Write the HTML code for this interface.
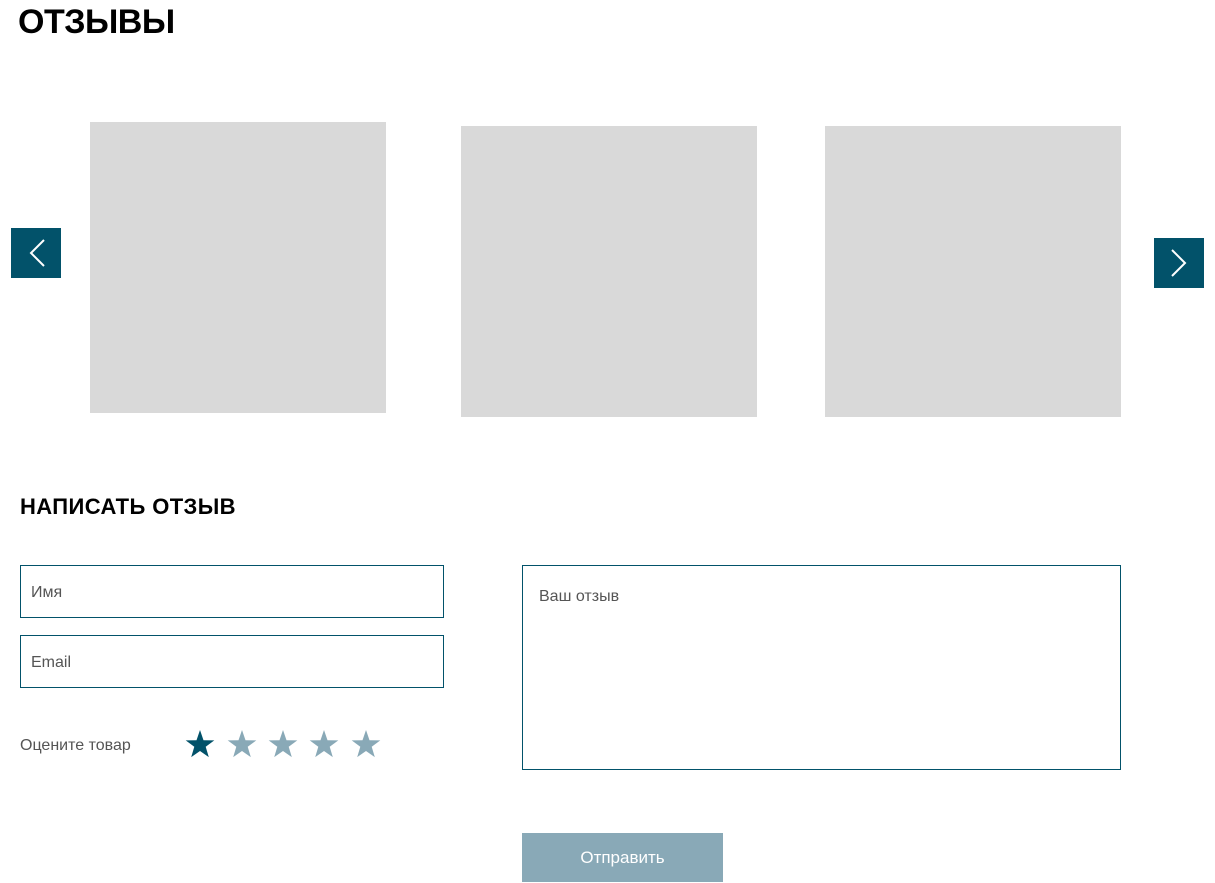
<!DOCTYPE html>
<html><head><meta charset="utf-8"><style>
body{margin:0;width:1215px;height:882px;background:#fff;font-family:"Liberation Sans",sans-serif;position:relative;overflow:hidden}
.a{position:absolute}
.img{background:#d9d9d9}
.btn{background:#02526a}
.inp{border:1px solid #02526a;box-sizing:border-box;color:#555;font-size:16px}
</style></head><body>
<div class="a" style="left:18px;top:3px;font-size:34px;font-weight:bold;color:#000;letter-spacing:-0.5px">ОТЗЫВЫ</div>
<div class="a img" style="left:90px;top:122px;width:296px;height:291px"></div>
<div class="a img" style="left:461px;top:126px;width:296px;height:291px"></div>
<div class="a img" style="left:825px;top:126px;width:296px;height:291px"></div>
<div class="a btn" style="left:11px;top:228px;width:50px;height:50px"><svg width="50" height="50"><path d="M33 12 L20 25 L33 38" stroke="#fff" stroke-width="2" fill="none"/></svg></div>
<div class="a btn" style="left:1154px;top:238px;width:50px;height:50px"><svg width="50" height="50"><path d="M18 12 L31 25 L18 38" stroke="#fff" stroke-width="2" fill="none"/></svg></div>
<div class="a" style="left:20px;top:494px;font-size:22px;font-weight:bold;color:#000;letter-spacing:0.4px">НАПИСАТЬ ОТЗЫВ</div>
<div class="a inp" style="left:20px;top:565px;width:424px;height:53px;padding:18px 0 0 10px">Имя</div>
<div class="a inp" style="left:20px;top:635px;width:424px;height:53px;padding:18px 0 0 10px">Email</div>
<div class="a inp" style="left:522px;top:565px;width:599px;height:205px;padding:22px 0 0 16px">Ваш отзыв</div>
<div class="a" style="left:20px;top:737px;font-size:16px;color:#555">Оцените товар</div>
<svg class="a" style="left:180px;top:728px" width="210" height="36">
<defs><path id="s" d="M0-15 L3.5-4.8 L14.3-4.6 L5.7 1.8 L8.8 12.1 L0 6 L-8.8 12.1 L-5.7 1.8 L-14.3-4.6 L-3.5-4.8Z"/></defs>
<use href="#s" x="20" y="17" fill="#02526a"/>
<use href="#s" x="62" y="17" fill="#89a9b7"/>
<use href="#s" x="103" y="17" fill="#89a9b7"/>
<use href="#s" x="144" y="17" fill="#89a9b7"/>
<use href="#s" x="186" y="17" fill="#89a9b7"/>
</svg>
<div class="a" style="left:522px;top:833px;width:201px;height:49px;background:#89a9b7;color:#fff;font-size:17px;text-align:center;line-height:50px">Отправить</div>
</body></html>
